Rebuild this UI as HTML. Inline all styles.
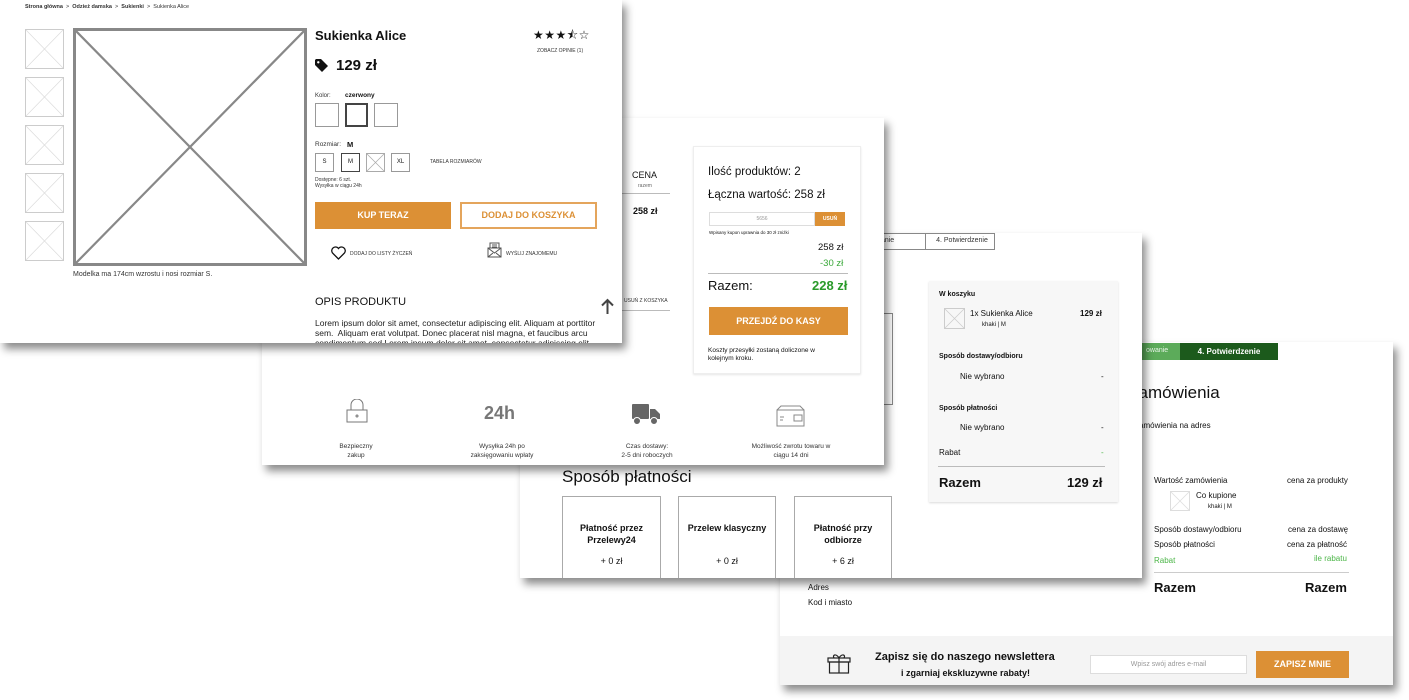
<!DOCTYPE html>
<html><head><meta charset="utf-8"><style>
*{box-sizing:border-box;margin:0;padding:0}
body{width:1409px;height:700px;background:#fff;position:relative;overflow:hidden;font-family:"Liberation Sans",Arial,sans-serif;color:#111}
.card{position:absolute;background:#fff;box-shadow:4px 6px 8px rgba(0,0,0,.45);overflow:hidden}
.a{position:absolute;white-space:nowrap}
.ph{position:absolute;border:1px solid #bbb}
.ph svg{position:absolute;left:0;top:0;width:100%;height:100%}
.btnO{position:absolute;background:#dc9035;color:#fff;font-weight:bold;text-align:center}
.c{text-align:center}
</style></head><body>

<!-- CARD 4 -->
<div class="card" style="left:780px;top:342px;width:613px;height:343px">
  <div class="a" style="left:360px;top:1px;width:138px;height:17px;background:#5cab5a"></div>
  <div class="a" style="left:366px;top:5px;font-size:7px;color:#e8f5e8">owanie</div>
  <div class="a" style="left:400px;top:1px;width:98px;height:17px;background:#1c5a1c;color:#fff;font-size:8px;font-weight:bold;line-height:17px;text-align:center">4. Potwierdzenie</div>
  <div class="a" style="left:350px;top:41px;font-size:17px">zamówienia</div>
  <div class="a" style="left:355px;top:79px;font-size:8px">zamówienia na adres</div>
  <div class="a" style="left:374px;top:134px;font-size:8px">Wartość zamówienia</div>
  <div class="a" style="left:507px;top:134px;font-size:8px">cena za produkty</div>
  <div class="ph" style="left:390px;top:149px;width:20px;height:20px;border-color:#ddd"><svg viewBox="0 0 20 20"><path d="M0 0L20 20M20 0L0 20" stroke="#ddd" stroke-width=".8"/></svg></div>
  <div class="a" style="left:416px;top:149px;font-size:8px">Co kupione</div>
  <div class="a" style="left:428px;top:162px;font-size:6px">khaki | M</div>
  <div class="a" style="left:374px;top:183px;font-size:8px">Sposób dostawy/odbioru</div>
  <div class="a" style="left:508px;top:183px;font-size:8px">cena za dostawę</div>
  <div class="a" style="left:374px;top:198px;font-size:8px">Sposób płatności</div>
  <div class="a" style="left:507px;top:198px;font-size:8px">cena za płatność</div>
  <div class="a" style="left:374px;top:214px;font-size:8px;color:#4cb648">Rabat</div>
  <div class="a" style="left:534px;top:212px;font-size:8px;color:#4cb648">ile rabatu</div>
  <div class="a" style="left:374px;top:230px;width:195px;border-top:1px solid #ccc"></div>
  <div class="a" style="left:374px;top:238px;font-size:13px;font-weight:bold">Razem</div>
  <div class="a" style="left:525px;top:238px;font-size:13px;font-weight:bold">Razem</div>
  <div class="a" style="left:28px;top:241px;font-size:8px">Adres</div>
  <div class="a" style="left:28px;top:256px;font-size:8px">Kod i miasto</div>
  <div class="a" style="left:0;top:294px;width:613px;height:49px;background:#f4f4f4"></div>
  <svg class="a" style="left:47px;top:310px" width="24" height="22" viewBox="0 0 24 22" fill="none" stroke="#222" stroke-width="1.2"><rect x="1" y="6" width="22" height="4"/><rect x="2.5" y="10" width="19" height="11"/><path d="M12 6V21M12 6C9 1 5 3 7 6M12 6C15 1 19 3 17 6"/></svg>
  <div class="a" style="left:95px;top:309px;font-size:11px;font-weight:bold">Zapisz się do naszego newslettera</div>
  <div class="a" style="left:121px;top:326px;font-size:9px;font-weight:bold">i zgarniaj ekskluzywne rabaty!</div>
  <div class="a" style="left:310px;top:313px;width:157px;height:19px;background:#fff;border:1px solid #ddd;font-size:7px;color:#999;text-align:center;line-height:17px">Wpisz swój adres e-mail</div>
  <div class="btnO" style="left:476px;top:309px;width:93px;height:27px;font-size:9px;line-height:27px">ZAPISZ MNIE</div>
</div>

<!-- CARD 3 -->
<div class="card" style="left:520px;top:233px;width:622px;height:345px">
  <div class="a" style="left:340px;top:0;width:135px;height:17px;border:1px solid #888"></div>
  <div class="a" style="left:405px;top:0;width:1px;height:17px;background:#888"></div>
  <div class="a" style="left:409px;top:4px;width:66px;font-size:7px;text-align:center;color:#333">4. Potwierdzenie</div>
  <div class="a" style="left:352px;top:4px;font-size:7px;color:#333">owanie</div>
  <div class="a" style="left:290px;top:80px;width:83px;height:92px;border:1px solid #888"></div>
  <div class="a" style="left:409px;top:48px;width:189px;height:221px;background:#f7f7f7;box-shadow:0 1px 2px rgba(0,0,0,.15)"></div>
  <div class="a" style="left:419px;top:58px;font-size:7px;font-weight:bold">W koszyku</div>
  <div class="ph" style="left:424px;top:75px;width:21px;height:21px;border-color:#ccc"><svg viewBox="0 0 21 21"><path d="M0 0L21 21M21 0L0 21" stroke="#ccc" stroke-width=".8"/></svg></div>
  <div class="a" style="left:450px;top:76px;font-size:8px">1x Sukienka Alice</div>
  <div class="a" style="left:560px;top:76px;font-size:8px;font-weight:bold">129 zł</div>
  <div class="a" style="left:462px;top:89px;font-size:6px">khaki | M</div>
  <div class="a" style="left:419px;top:120px;font-size:7px;font-weight:bold">Sposób dostawy/odbioru</div>
  <div class="a" style="left:440px;top:139px;font-size:8px">Nie wybrano</div>
  <div class="a" style="left:581px;top:139px;font-size:8px">-</div>
  <div class="a" style="left:419px;top:172px;font-size:7px;font-weight:bold">Sposób płatności</div>
  <div class="a" style="left:440px;top:190px;font-size:8px">Nie wybrano</div>
  <div class="a" style="left:581px;top:190px;font-size:8px">-</div>
  <div class="a" style="left:419px;top:215px;font-size:8px">Rabat</div>
  <div class="a" style="left:581px;top:215px;font-size:8px;color:#4cb648">-</div>
  <div class="a" style="left:418px;top:233px;width:167px;border-top:1px solid #bbb"></div>
  <div class="a" style="left:419px;top:242px;font-size:13px;font-weight:bold">Razem</div>
  <div class="a" style="left:547px;top:242px;font-size:13px;font-weight:bold">129 zł</div>
  <div class="a" style="left:42px;top:234px;font-size:17px">Sposób płatności</div>
  <div class="a c" style="left:42px;top:263px;width:99px;height:90px;border:1px solid #aaa"><div style="margin-top:25px;font-size:9px;font-weight:bold;line-height:12px">Płatność przez<br>Przelewy24</div><div style="margin-top:10px;font-size:9px">+ 0 zł</div></div>
  <div class="a c" style="left:158px;top:263px;width:98px;height:90px;border:1px solid #aaa"><div style="margin-top:25px;font-size:9px;font-weight:bold;line-height:12px">Przelew klasyczny</div><div style="margin-top:22px;font-size:9px">+ 0 zł</div></div>
  <div class="a c" style="left:274px;top:263px;width:98px;height:90px;border:1px solid #aaa"><div style="margin-top:25px;font-size:9px;font-weight:bold;line-height:12px">Płatność przy<br>odbiorze</div><div style="margin-top:10px;font-size:9px">+ 6 zł</div></div>
</div>

<!-- CARD 2 -->
<div class="card" style="left:262px;top:118px;width:622px;height:347px">
  <div class="a" style="left:370px;top:52px;font-size:9px">CENA</div>
  <div class="a" style="left:376px;top:65px;font-size:5px;color:#666">razem</div>
  <div class="a" style="left:350px;top:75px;width:58px;border-top:1px solid #bbb"></div>
  <div class="a" style="left:371px;top:88px;font-size:9px;font-weight:bold">258 zł</div>
  <div class="a" style="left:362px;top:180px;font-size:5px;color:#333">USUŃ Z KOSZYKA</div>
  <div class="a" style="left:350px;top:192px;width:58px;border-top:1px solid #bbb"></div>
  <div class="a" style="left:431px;top:28px;width:168px;height:228px;border:1px solid #eee;box-shadow:0 1px 2px rgba(0,0,0,.1)"></div>
  <div class="a" style="left:446px;top:48px;font-size:11.5px">Ilość produktów: 2</div>
  <div class="a" style="left:446px;top:71px;font-size:11.5px">Łączna wartość: 258 zł</div>
  <div class="a" style="left:447px;top:94px;width:106px;height:14px;border:1px solid #ddd;font-size:5px;color:#999;text-align:center;line-height:12px">5656</div>
  <div class="btnO" style="left:553px;top:94px;width:30px;height:14px;font-size:5px;line-height:14px">USUŃ</div>
  <div class="a" style="left:447px;top:112px;font-size:4.5px">Wpisany kupon uprawnia do 30 zł zniżki</div>
  <div class="a" style="left:556px;top:124px;font-size:9.5px">258 zł</div>
  <div class="a" style="left:558px;top:140px;font-size:9.5px;color:#3aa83a">-30 zł</div>
  <div class="a" style="left:446px;top:155px;width:140px;border-top:1px solid #bbb"></div>
  <div class="a" style="left:446px;top:160px;font-size:13px">Razem:</div>
  <div class="a" style="left:550px;top:160px;font-size:13px;font-weight:bold;color:#2a9a2a">228 zł</div>
  <div class="btnO" style="left:447px;top:189px;width:139px;height:28px;font-size:9px;line-height:28px">PRZEJDŹ DO KASY</div>
  <div class="a" style="left:446px;top:229px;font-size:6.5px;line-height:8px">Koszty przesyłki zostaną doliczone w<br>kolejnym kroku.</div>
  <svg class="a" style="left:84px;top:281px" width="22" height="24" viewBox="0 0 22 24" fill="none" stroke="#777" stroke-width="1"><path d="M5 11V6a6 6 0 0 1 12 0v5"/><rect x="1" y="11" width="20" height="12"/><circle cx="11" cy="17" r="1"/></svg>
  <div class="a c" style="left:60px;top:324px;width:68px;font-size:6.5px;line-height:9px;color:#333">Bezpieczny<br>zakup</div>
  <div class="a" style="left:222px;top:285px;font-size:18px;font-weight:bold;color:#777">24h</div>
  <div class="a c" style="left:190px;top:324px;width:100px;font-size:6.5px;line-height:9px;color:#333">Wysyłka 24h po<br>zaksięgowaniu wpłaty</div>
  <svg class="a" style="left:370px;top:286px" width="28" height="22" viewBox="0 0 28 22" fill="#666"><rect x="0" y="0" width="17" height="15" rx="1"/><path d="M18 5h5l5 5v5H18z"/><circle cx="5" cy="17" r="3.5" stroke="#fff"/><circle cx="22" cy="17" r="3.5" stroke="#fff"/></svg>
  <div class="a c" style="left:340px;top:324px;width:90px;font-size:6.5px;line-height:9px;color:#333">Czas dostawy:<br>2-5 dni roboczych</div>
  <svg class="a" style="left:514px;top:287px" width="29" height="22" viewBox="0 0 29 22" fill="none" stroke="#888" stroke-width="1"><rect x="1" y="5" width="27" height="16"/><path d="M1 5L5 1h19l4 4M4 12h4M4 15h3M18 10h8v6h-8z"/></svg>
  <div class="a c" style="left:470px;top:324px;width:118px;font-size:6.5px;line-height:9px;color:#333">Możliwość zwrotu towaru w<br>ciągu 14 dni</div>
</div>

<!-- CARD 1 -->
<div class="card" style="left:0;top:0;width:622px;height:343px">
  <div class="a" style="left:25px;top:4px;font-size:5.5px;color:#333"><b>Strona główna</b> &nbsp;&gt;&nbsp; <b>Odzież damska</b> &nbsp;&gt;&nbsp; <b>Sukienki</b> &nbsp;&gt;&nbsp; Sukienka Alice</div>
  <div class="ph" style="left:25px;top:29px;width:39px;height:40px;border-color:#ccc"><svg viewBox="0 0 39 40" preserveAspectRatio="none"><path d="M0 0L39 40M39 0L0 40" stroke="#ddd" stroke-width=".8"/></svg></div>
  <div class="ph" style="left:25px;top:77px;width:39px;height:40px;border-color:#ccc"><svg viewBox="0 0 39 40" preserveAspectRatio="none"><path d="M0 0L39 40M39 0L0 40" stroke="#ddd" stroke-width=".8"/></svg></div>
  <div class="ph" style="left:25px;top:125px;width:39px;height:40px;border-color:#ccc"><svg viewBox="0 0 39 40" preserveAspectRatio="none"><path d="M0 0L39 40M39 0L0 40" stroke="#ddd" stroke-width=".8"/></svg></div>
  <div class="ph" style="left:25px;top:173px;width:39px;height:40px;border-color:#ccc"><svg viewBox="0 0 39 40" preserveAspectRatio="none"><path d="M0 0L39 40M39 0L0 40" stroke="#ddd" stroke-width=".8"/></svg></div>
  <div class="ph" style="left:25px;top:221px;width:39px;height:40px;border-color:#ccc"><svg viewBox="0 0 39 40" preserveAspectRatio="none"><path d="M0 0L39 40M39 0L0 40" stroke="#ddd" stroke-width=".8"/></svg></div>
  <div class="a" style="left:73px;top:28px;width:234px;height:238px;border:3px solid #888"><svg width="228" height="232" viewBox="0 0 228 232" preserveAspectRatio="none" style="display:block"><path d="M0 0L228 232M228 0L0 232" stroke="#888" stroke-width="2.2"/></svg></div>
  <div class="a" style="left:73px;top:271px;font-size:7px;color:#333">Modelka ma 174cm wzrostu i nosi rozmiar S.</div>
  <div class="a" style="left:315px;top:28px;font-size:13px;font-weight:bold">Sukienka Alice</div>
  <div class="a" style="left:533px;top:26px;font-size:12px;letter-spacing:0.5px">★★★⯪☆</div>
  <div class="a" style="left:537px;top:48px;font-size:5px;color:#333">ZOBACZ OPINIE (1)</div>
  <svg class="a" style="left:315px;top:59px" width="13" height="13" viewBox="0 0 13 13"><path d="M0 1V6L7 13L13 7L6 0H1z" fill="#111"/><circle cx="3.3" cy="3.3" r="1.2" fill="#fff"/></svg>
  <div class="a" style="left:336px;top:57px;font-size:15px;font-weight:bold">129 zł</div>
  <div class="a" style="left:315px;top:93px;font-size:6px;color:#333">Kolor:</div>
  <div class="a" style="left:345px;top:92px;font-size:6.5px;font-weight:bold">czerwony</div>
  <div class="a" style="left:315px;top:103px;width:24px;height:24px;border:1px solid #999"></div>
  <div class="a" style="left:345px;top:103px;width:23px;height:24px;border:2px solid #444"></div>
  <div class="a" style="left:374px;top:103px;width:24px;height:24px;border:1px solid #999"></div>
  <div class="a" style="left:315px;top:141px;font-size:6.5px;color:#333">Rozmiar:</div>
  <div class="a" style="left:347px;top:140px;font-size:7.5px;font-weight:bold">M</div>
  <div class="a c" style="left:315px;top:153px;width:19px;height:19px;border:1px solid #999;font-size:6px;line-height:17px">S</div>
  <div class="a c" style="left:341px;top:153px;width:19px;height:19px;border:1.5px solid #444;font-size:6px;line-height:16px">M</div>
  <div class="ph" style="left:366px;top:153px;width:19px;height:19px;border-color:#aaa"><svg viewBox="0 0 19 19"><path d="M0 0L19 19M19 0L0 19" stroke="#aaa" stroke-width=".8"/></svg></div>
  <div class="a c" style="left:391px;top:153px;width:19px;height:19px;border:1px solid #999;font-size:6px;line-height:17px">XL</div>
  <div class="a" style="left:430px;top:159px;font-size:5px;color:#333">TABELA ROZMIARÓW</div>
  <div class="a" style="left:315px;top:177px;font-size:5px;line-height:6px;color:#333">Dostępne: 6 szt.<br>Wysyłka w ciągu 24h</div>
  <div class="btnO" style="left:315px;top:202px;width:136px;height:27px;font-size:9px;line-height:27px">KUP TERAZ</div>
  <div class="a c" style="left:460px;top:202px;width:137px;height:27px;border:2px solid #e4a55c;color:#dc9035;font-weight:bold;font-size:9px;line-height:23px">DODAJ DO KOSZYKA</div>
  <svg class="a" style="left:331px;top:246px" width="15" height="14" viewBox="0 0 15 14" fill="none" stroke="#111" stroke-width="1.3"><path d="M7.5 13L1.5 7A3.5 3.5 0 0 1 7.5 2.5A3.5 3.5 0 0 1 13.5 7z"/></svg>
  <div class="a" style="left:350px;top:251px;font-size:5px;color:#333">DODAJ DO LISTY ŻYCZEŃ</div>
  <svg class="a" style="left:487px;top:242px" width="15" height="16" viewBox="0 0 15 16" fill="none" stroke="#555" stroke-width="1"><path d="M3 6V1h9v5M5 3h5M5 5h5"/><rect x="1" y="6" width="13" height="9"/><path d="M1 6l6.5 5L14 6M1 15l5-4M14 15l-5-4"/></svg>
  <div class="a" style="left:506px;top:251px;font-size:5px;color:#333">WYŚLIJ ZNAJOMEMU</div>
  <div class="a" style="left:315px;top:296px;font-size:11px">OPIS PRODUKTU</div>
  <svg class="a" style="left:601px;top:298px" width="13" height="16" viewBox="0 0 13 16" fill="none" stroke="#444" stroke-width="2"><path d="M6.5 16V2M1 7.5L6.5 2L12 7.5"/></svg>
  <div class="a" style="left:315px;top:318px;font-size:8.5px;line-height:10px;color:#222;white-space:normal;width:300px">Lorem ipsum dolor sit amet, consectetur adipiscing elit. Aliquam at porttitor sem.&nbsp; Aliquam erat volutpat. Donec placerat nisl magna, et faucibus arcu condimentum sed Lorem ipsum dolor sit amet, consectetur adipiscing elit.</div>
</div>

</body></html>
